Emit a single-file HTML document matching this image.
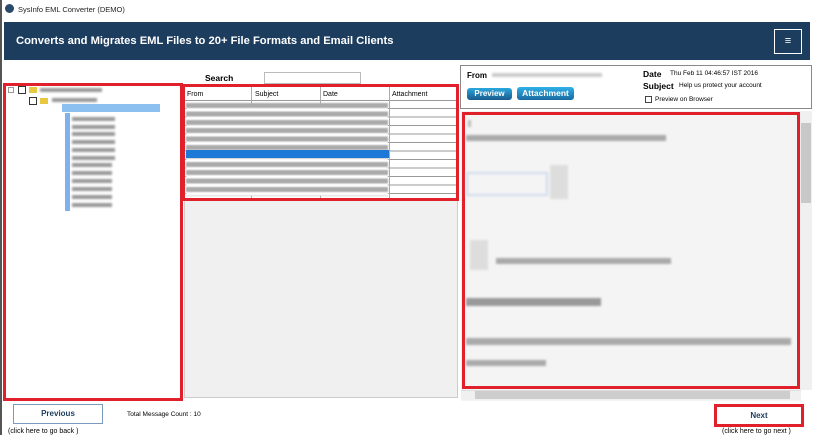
<!DOCTYPE html>
<html><head><style>
*{margin:0;padding:0;box-sizing:border-box}
body{width:815px;height:435px;background:#fff;font-family:"Liberation Sans",sans-serif;position:relative;overflow:hidden;font-size:8px;color:#000}
.a{position:absolute}
.blur{background:#bbb;filter:blur(1px);height:4px;position:absolute}
</style></head><body>
<div class="a" style="left:0;top:0;width:2px;height:435px;background:#555"></div>
<div class="a" style="left:5px;top:4px;width:9px;height:9px;border-radius:50%;background:#2a4a6a"></div>
<div class="a" style="left:18px;top:5px;font-size:7.5px;color:#222">SysInfo EML Converter (DEMO)</div>
<div class="a" style="left:4px;top:22px;width:806px;height:38px;background:#1c3d5e"></div>
<div class="a" style="left:16px;top:35px;font-size:11.2px;font-weight:bold;color:#fff">Converts and Migrates EML Files to 20+ File Formats and Email Clients</div>
<div class="a" style="left:774px;top:29px;width:28px;height:25px;border:1px solid #fff;color:#fff;font-size:11px;text-align:center;line-height:23px">≡</div>

<div class="a" style="left:205px;top:73px;font-size:8.5px;font-weight:bold">Search</div>
<div class="a" style="left:264px;top:72px;width:97px;height:12px;border:1px solid #bbb"></div>

<!-- left tree -->
<div class="a" style="left:3px;top:83px;width:180px;height:318px;border:3px solid #e0202a"></div>
<div class="a" style="left:8px;top:87px;width:6px;height:6px;border:1px solid #999"></div>
<div class="a" style="left:18px;top:86px;width:8px;height:8px;border:1px solid #333"></div>
<div class="a" style="left:29px;top:87px;width:8px;height:6px;background:#e8c840"></div>
<div class="blur" style="left:40px;top:88px;width:62px;background:#999"></div>
<div class="a" style="left:29px;top:97px;width:8px;height:8px;border:1px solid #333"></div>
<div class="a" style="left:40px;top:98px;width:8px;height:6px;background:#e8c840"></div>
<div class="blur" style="left:52px;top:98px;width:45px;background:#999"></div>
<div class="a" style="left:62px;top:104px;width:98px;height:8px;background:#8cc0f0"></div>
<div class="a" style="left:65px;top:113px;width:5px;height:98px;background:#4a90e8;opacity:.7"></div>
<div class="blur" style="left:72px;top:117px;width:43px;background:#999"></div>
<div class="blur" style="left:72px;top:125px;width:43px;background:#999"></div>
<div class="blur" style="left:72px;top:132px;width:43px;background:#999"></div>
<div class="blur" style="left:72px;top:140px;width:43px;background:#999"></div>
<div class="blur" style="left:72px;top:148px;width:43px;background:#999"></div>
<div class="blur" style="left:72px;top:156px;width:43px;background:#999"></div>
<div class="blur" style="left:72px;top:163px;width:40px;background:#999"></div>
<div class="blur" style="left:72px;top:171px;width:40px;background:#999"></div>
<div class="blur" style="left:72px;top:179px;width:40px;background:#999"></div>
<div class="blur" style="left:72px;top:187px;width:40px;background:#999"></div>
<div class="blur" style="left:72px;top:195px;width:40px;background:#999"></div>
<div class="blur" style="left:72px;top:203px;width:40px;background:#999"></div>

<!-- grid -->
<div class="a" style="left:184px;top:200px;width:274px;height:198px;background:#f0f0f0;border:1px solid #ccc"></div>
<div class="a" style="left:182px;top:84px;width:277px;height:117px;border:3px solid #e0202a;background:#fff"></div>
<div class="a" style="left:185px;top:87px;width:271px;height:111px;
background:repeating-linear-gradient(#fff 0 7.5px,#999 7.5px 8.5px);background-position:0 5px"></div>
<div class="a" style="left:185px;top:87px;width:271px;height:14px;background:#fff;border-bottom:1px solid #999"></div>
<div class="a" style="left:187px;top:91px;font-size:7px">From</div>
<div class="a" style="left:255px;top:91px;font-size:7px">Subject</div>
<div class="a" style="left:323px;top:91px;font-size:7px">Date</div>
<div class="a" style="left:392px;top:91px;font-size:7px">Attachment</div>
<div class="a" style="left:251px;top:87px;width:1px;height:111px;background:#aaa"></div>
<div class="a" style="left:320px;top:87px;width:1px;height:111px;background:#aaa"></div>
<div class="a" style="left:389px;top:87px;width:1px;height:111px;background:#aaa"></div>
<div class="a" style="left:186px;top:103px;width:202px;height:93px;background:repeating-linear-gradient(#aaa 0 5px,#fff 5px 8.4px);filter:blur(.8px)"></div>
<div class="a" style="left:186px;top:150px;width:203px;height:8px;background:#1e78d8"></div>

<!-- right -->
<div class="a" style="left:460px;top:65px;width:352px;height:44px;border:1px solid #888;background:#fff"></div>
<div class="a" style="left:467px;top:71px;font-size:8px;font-weight:bold">From</div>
<div class="blur" style="left:492px;top:73px;width:110px;background:#ccc"></div>
<div class="a" style="left:467px;top:88px;width:45px;height:12px;border-radius:3px;background:linear-gradient(#2aa8e0,#1a5a8a);color:#fff;font-weight:bold;font-size:8px;text-align:center;line-height:12px">Preview</div>
<div class="a" style="left:517px;top:87px;width:57px;height:13px;border-radius:3px;background:linear-gradient(#30b0e8,#1a6aa0);color:#fff;font-weight:bold;font-size:8.5px;text-align:center;line-height:13px">Attachment</div>
<div class="a" style="left:643px;top:69px;font-size:8.5px;font-weight:bold">Date</div>
<div class="a" style="left:670px;top:70px;font-size:6.5px">Thu Feb 11 04:46:57 IST 2016</div>
<div class="a" style="left:643px;top:81px;font-size:8.5px;font-weight:bold">Subject</div>
<div class="a" style="left:679px;top:82px;font-size:6.5px">Help us protect your account</div>
<div class="a" style="left:645px;top:96px;width:7px;height:7px;border:1px solid #444"></div>
<div class="a" style="left:655px;top:96px;font-size:6.5px">Preview on Browser</div>

<div class="a" style="left:461px;top:111px;width:340px;height:290px;background:#f4f4f4"></div>
<div class="a" style="left:800px;top:111px;width:12px;height:279px;background:#f0f0f0"></div>
<div class="a" style="left:801px;top:123px;width:10px;height:80px;background:#c8c8c8"></div>
<div class="a" style="left:461px;top:390px;width:340px;height:10px;background:#f0f0f0;border-top:1px solid #ddd"></div>
<div class="a" style="left:475px;top:391px;width:315px;height:8px;background:#cdcdcd"></div>
<div class="a" style="left:462px;top:112px;width:338px;height:277px;border:3px solid #e0202a"></div>
<div class="blur" style="left:468px;top:120px;width:3px;height:7px"></div>
<div class="blur" style="left:466px;top:135px;width:200px;height:6px;background:#aaa"></div>
<div class="a" style="left:466px;top:172px;width:82px;height:24px;border:2px solid #d0dced;filter:blur(1px)"></div>
<div class="a" style="left:550px;top:165px;width:18px;height:34px;background:#ddd;filter:blur(1px)"></div>
<div class="a" style="left:470px;top:240px;width:18px;height:30px;background:#ddd;filter:blur(1px)"></div>
<div class="blur" style="left:496px;top:258px;width:175px;height:6px;background:#aaa"></div>
<div class="blur" style="left:466px;top:298px;width:135px;height:8px;background:#999"></div>
<div class="blur" style="left:466px;top:338px;width:325px;height:7px;background:#aaa"></div>
<div class="blur" style="left:466px;top:360px;width:80px;height:6px;background:#aaa"></div>

<!-- bottom -->
<div class="a" style="left:13px;top:404px;width:90px;height:20px;border:1px solid #7a9ac0;text-align:center;line-height:18px;font-size:8px;font-weight:bold;color:#1c3d5e">Previous</div>
<div class="a" style="left:127px;top:411px;font-size:6.5px">Total Message Count : 10</div>
<div class="a" style="left:8px;top:428px;font-size:7px">(click here to  go back )</div>
<div class="a" style="left:714px;top:404px;width:90px;height:23px;border:3px solid #e0202a;text-align:center;line-height:17px;font-size:8px;font-weight:bold;color:#1c3d5e">Next</div>
<div class="a" style="left:722px;top:428px;font-size:7px">(click here to  go next )</div>
</body></html>
